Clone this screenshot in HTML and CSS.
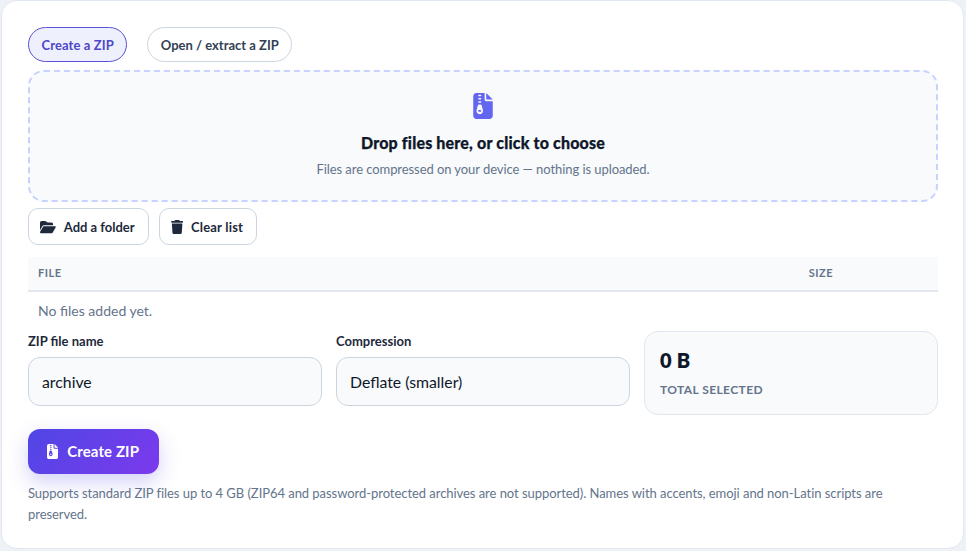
FILE: index.html
```html
<!DOCTYPE html>
<html lang="en">
<head>
<meta charset="utf-8">
<title>ZIP tool</title>
<link rel="stylesheet" href="styles.css">
</head>
<body>
<main class="card">
  <div class="tabs">
    <button class="tab tab-active">Create a ZIP</button>
    <button class="tab">Open / extract a ZIP</button>
  </div>
  <section class="drop">
    <svg class="drop-icon" viewBox="0 0 384 512"><path d="M64 0C28.7 0 0 28.7 0 64V448c0 35.3 28.7 64 64 64H320c35.3 0 64-28.7 64-64V160H256c-17.7 0-32-14.3-32-32V0H64zM256 0V128H384L256 0zM96 48c0-8.8 7.2-16 16-16h32c8.800 0 16 7.200 16 16s-7.200 16-16 16H112c-8.800 0-16-7.200-16-16zm0 64c0-8.800 7.200-16 16-16h32c8.800 0 16 7.200 16 16s-7.200 16-16 16H112c-8.800 0-16-7.200-16-16zm0 64c0-8.800 7.200-16 16-16h32c8.800 0 16 7.200 16 16s-7.200 16-16 16H112c-8.800 0-16-7.200-16-16zm-6.300 71.800c3.700-14 16.400-23.800 30.900-23.800h14.800c14.500 0 27.200 9.700 30.900 23.800l23.500 88.200c1.400 5.400 2.100 10.900 2.100 16.400c0 35.200-28.800 63.600-64 63.600s-64-28.400-64-63.600c0-5.500 .7-11.100 2.100-16.400l23.500-88.200zM112 336c-8.800 0-16 7.200-16 16s7.200 16 16 16h32c8.800 0 16-7.200 16-16s-7.200-16-16-16H112z"/></svg>
    <h2 class="drop-title">Drop files here, or click to choose</h2>
    <p class="drop-sub">Files are compressed on your device — nothing is uploaded.</p>
  </section>
  <div class="actions">
    <button class="btn"><svg class="btn-icon" viewBox="0 0 576 512"><path d="M88.700 223.800L0 375.800V96C0 60.700 28.700 32 64 32H181.500c17 0 33.300 6.700 45.300 18.700l26.500 26.500c12 12 28.300 18.700 45.300 18.700H416c35.300 0 64 28.700 64 64v32H144c-22.800 0-43.800 12.100-55.300 31.800zm27.600 16.100C122.100 230 132.600 224 144 224H544c11.500 0 22 6.100 27.700 16.100s5.700 22.200-.1 32.100l-112 192C453.900 474 443.400 480 432 480H32c-11.500 0-22-6.100-27.700-16.100s-5.700-22.200 .1-32.100l112-192z"/></svg>Add a folder</button>
    <button class="btn btn-clear"><svg class="btn-icon" viewBox="0 0 448 512"><path d="M135.200 17.700L128 32H32C14.300 32 0 46.300 0 64S14.300 96 32 96H416c17.700 0 32-14.300 32-32s-14.300-32-32-32H320l-7.200-14.300C307.400 6.800 296.300 0 284.200 0H163.800c-12.100 0-23.200 6.800-28.600 17.700zM416 128H32L53.200 467c1.600 25.300 22.600 45 47.900 45H346.900c25.300 0 46.300-19.700 47.900-45L416 128z"/></svg>Clear list</button>
  </div>
  <div class="table-head"><span>FILE</span><span class="col-size">SIZE</span></div>
  <p class="empty">No files added yet.</p>
  <div class="fields">
    <label class="field"><span class="field-label">ZIP file name</span><span class="input">archive</span></label>
    <label class="field"><span class="field-label">Compression</span><span class="input">Deflate (smaller)</span></label>
    <div class="stat"><strong class="stat-value">0 B</strong><span class="stat-label">TOTAL SELECTED</span></div>
  </div>
  <button class="primary"><svg class="primary-icon" viewBox="0 0 384 512"><path d="M64 0C28.7 0 0 28.7 0 64V448c0 35.3 28.7 64 64 64H320c35.3 0 64-28.7 64-64V160H256c-17.7 0-32-14.3-32-32V0H64zM256 0V128H384L256 0zM96 48c0-8.8 7.2-16 16-16h32c8.800 0 16 7.200 16 16s-7.200 16-16 16H112c-8.800 0-16-7.200-16-16zm0 64c0-8.800 7.200-16 16-16h32c8.800 0 16 7.200 16 16s-7.200 16-16 16H112c-8.800 0-16-7.200-16-16zm0 64c0-8.800 7.200-16 16-16h32c8.800 0 16 7.200 16 16s-7.200 16-16 16H112c-8.800 0-16-7.200-16-16zm-6.300 71.800c3.700-14 16.400-23.800 30.900-23.800h14.800c14.500 0 27.200 9.700 30.900 23.800l23.500 88.200c1.400 5.400 2.100 10.900 2.100 16.400c0 35.200-28.800 63.600-64 63.600s-64-28.400-64-63.600c0-5.500 .7-11.100 2.100-16.400l23.500-88.200zM112 336c-8.800 0-16 7.200-16 16s7.200 16 16 16h32c8.800 0 16-7.200 16-16s-7.200-16-16-16H112z"/></svg>Create ZIP</button>
  <p class="note">Supports standard ZIP files up to 4 GB (ZIP64 and password-protected archives are not supported). Names with accents, emoji and non-Latin scripts are preserved.</p>
</main>
</body>
</html>
```
FILE: styles.css
```css
* { box-sizing: border-box; }
html, body { margin: 0; height: 100%; }
body {
  background: #eef2f7;
  padding: 0 2px 2px 1px;
  font-family: "Lato", "Noto Sans", sans-serif;
  color: #0f172a;
  overflow: hidden;
}
button { font-family: inherit; cursor: pointer; }
.card {
  height: 549px;
  background: #fff;
  border: 1px solid #e2e8f0;
  border-radius: 16px;
  padding: 26px 25px 0 26px;
}
.tabs { display: flex; gap: 20px; margin-bottom: 8px; }
.tab {
  height: 35px;
  padding: 0 12.5px;
  border-radius: 18px;
  border: 1px solid #cbd5e1;
  background: #fff;
  color: #334155;
  font-size: 13px;
  font-weight: 700;
}
.tab-active { background: #eef0fd; border-color: #5b50d6; color: #4f46c8; letter-spacing: .1px; }
.drop {
  height: 132px;
  border: 2px dashed #c7d2fe;
  border-radius: 16px;
  background: #f8fafc;
  display: flex;
  flex-direction: column;
  align-items: center;
  padding-top: 21px;
}
.drop-icon { width: 20px; height: 26px; fill: #6366f1; display: block; }
.drop-title {
  margin: 14px 0 0;
  font-size: 16px;
  line-height: 20px;
  font-weight: 900;
  letter-spacing: .17px;
  -webkit-text-stroke: .25px #0f172a;
}
.drop-sub { margin: 7px 0 0; font-size: 13px; line-height: 18px; letter-spacing: -.07px; color: #64748b; }
.actions { display: flex; gap: 10px; margin-top: 6px; }
.btn {
  height: 37px;
  display: flex;
  align-items: center;
  gap: 8px;
  padding: 0 13px 0 11px;
  border: 1px solid #cbd5e1;
  border-radius: 10px;
  background: #fff;
  color: #1e293b;
  font-size: 13px;
  font-weight: 700;
}
.btn-clear { letter-spacing: .2px; }
.btn-icon { height: 14px; width: auto; fill: #1e293b; display: block; }
.table-head {
  height: 35px;
  margin-top: 12px;
  display: flex;
  align-items: center;
  justify-content: space-between;
  padding: 0 105px 2px 10px;
  background: #f8fafc;
  border-bottom: 2px solid #e2e8f0;
  font-size: 11px;
  font-weight: 700;
  letter-spacing: .5px;
  color: #64748b;
}
.empty { margin: 10px 0 0 10px; font-size: 14px; line-height: 18px; color: #64748b; }
.fields { display: grid; grid-template-columns: repeat(3, 294px); gap: 14px; margin-top: 11px; align-items: start; }
.field { display: flex; flex-direction: column; }
.field-label { font-size: 13px; line-height: 20px; font-weight: 700; color: #1e293b; }
.input {
  margin-top: 6px;
  height: 49px;
  display: flex;
  align-items: center;
  padding: 0 13px 1px;
  border: 1px solid #cbd5e1;
  border-radius: 12px;
  background: #f8fafc;
  font-size: 15.8px;
  color: #0f172a;
}
.stat {
  height: 84px;
  padding: 15px;
  border: 1px solid #e2e8f0;
  border-radius: 14px;
  background: #f8fafc;
  display: flex;
  flex-direction: column;
}
.stat-value { font-size: 20px; line-height: 26px; font-weight: 800; letter-spacing: .3px; }
.stat-label { margin-top: 9px; font-size: 12px; line-height: 16px; font-weight: 700; letter-spacing: .4px; color: #64748b; }
.primary {
  margin-top: 14px;
  height: 45px;
  padding: 0 20px 1px 19px;
  display: flex;
  align-items: center;
  gap: 9px;
  border: 0;
  border-radius: 12px;
  background: linear-gradient(135deg, #4f46e5, #7c3aed);
  box-shadow: 0 8px 20px rgba(79, 70, 229, .25);
  color: #fff;
  font-size: 15px;
  font-weight: 700;
  letter-spacing: .1px;
}
.primary-icon { height: 15px; width: auto; fill: #fff; display: block; }
.note { margin: 9px 0 0; font-size: 13px; line-height: 21px; letter-spacing: -.05px; color: #64748b; }
```
